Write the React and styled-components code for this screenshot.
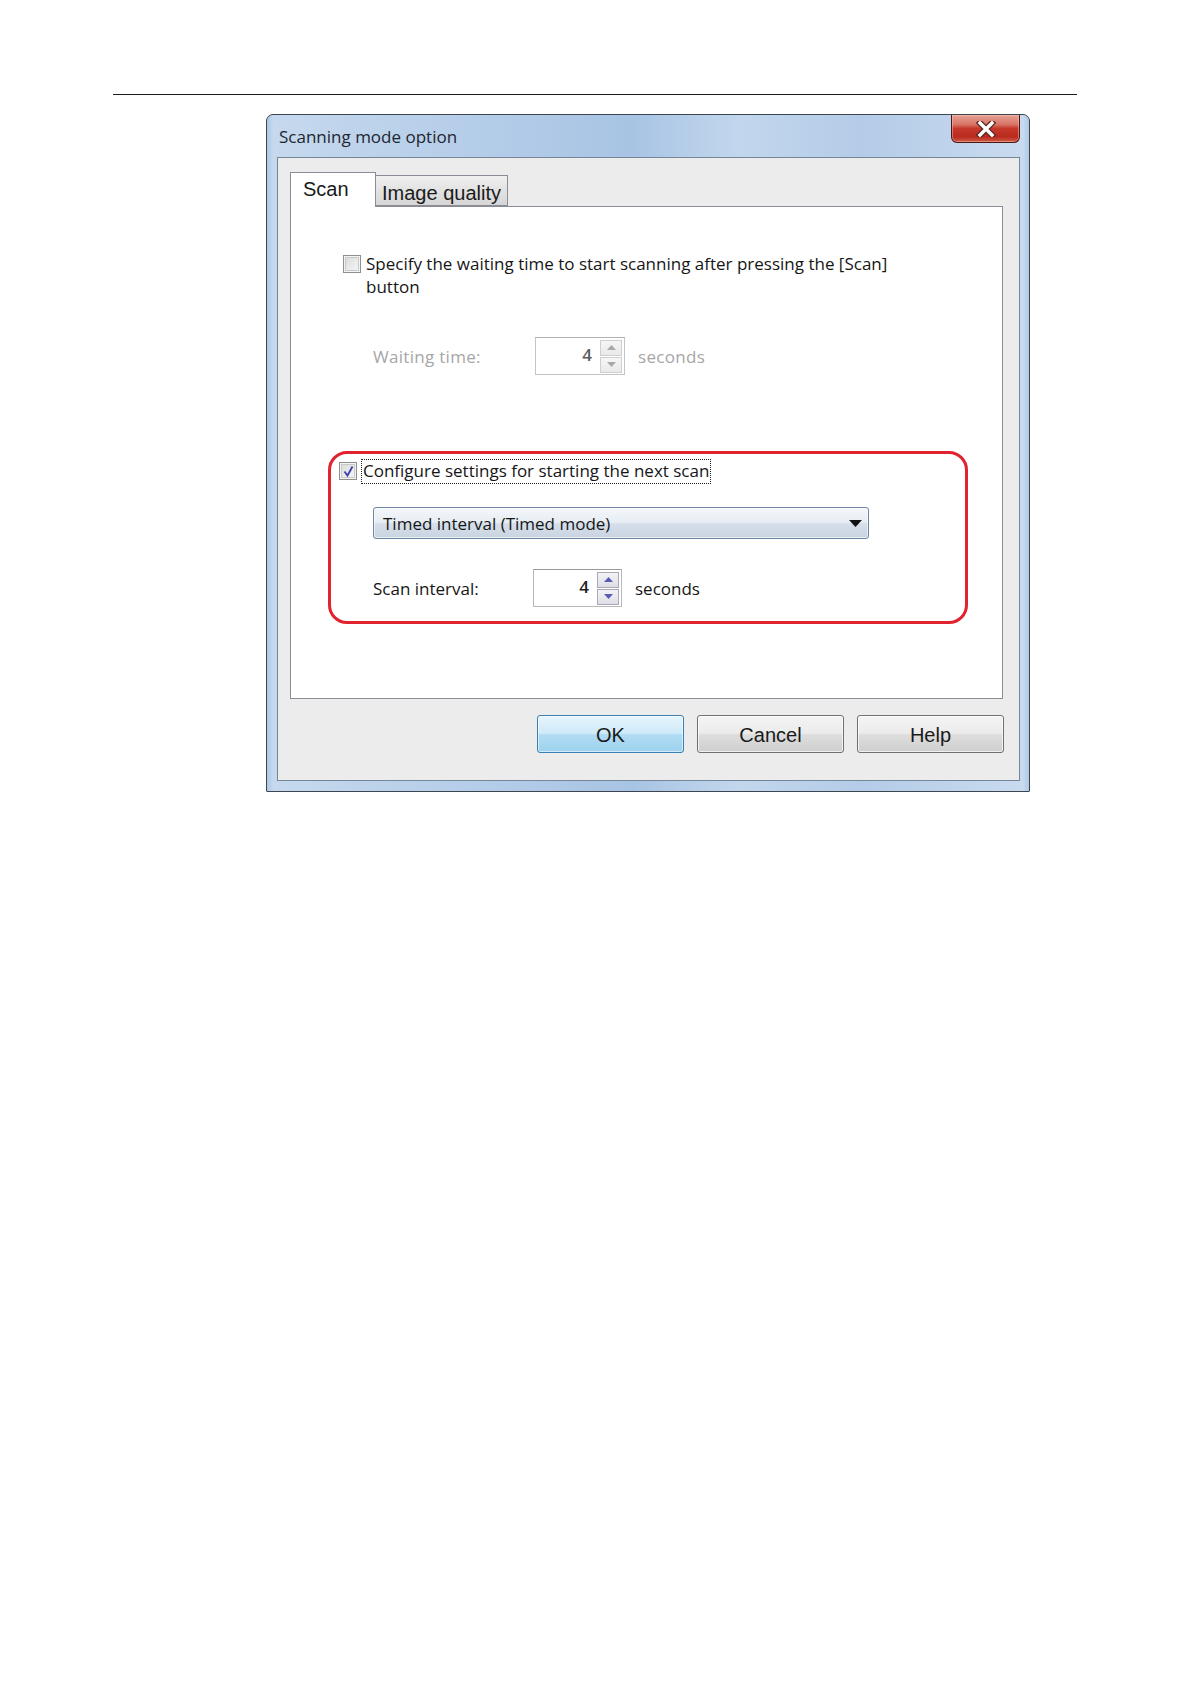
import React from 'react';
import styled, { createGlobalStyle } from 'styled-components';

const Global = createGlobalStyle`
  body {
    margin: 0;
    background: #ffffff;
  }
`;

const Page = styled.div`
  width: 1191px;
  min-height: 1684px;
  padding-top: 94px;
  box-sizing: border-box;
`;

const Rule = styled.div`
  margin-left: 113px;
  width: 964px;
  height: 1px;
  background: #1a1a1a;
`;

const Dialog = styled.div`
  margin: 19px 0 0 266px;
  width: 764px;
  height: 678px;
  box-sizing: border-box;
  border: 1px solid #3d4650;
  border-radius: 7px 7px 1px 1px;
  padding: 0 9px 10px 10px;
  display: flex;
  flex-direction: column;
  background:
    linear-gradient(90deg, rgba(150, 185, 222, 0.55) 0px, rgba(150, 185, 222, 0) 6px,
      rgba(150, 185, 222, 0) calc(100% - 6px), rgba(150, 185, 222, 0.55) 100%),
    linear-gradient(90deg, #c6d9ee 0%, #b6cee9 25%, #a8c4e4 48%, #c2d7ed 62%, #b4cce8 78%, #c9dbef 100%);
`;

const TitleBar = styled.div`
  height: 42px;
  display: flex;
  justify-content: space-between;
  align-items: flex-start;
`;

const Title = styled.div`
  align-self: center;
  margin-left: 2px;
  font-family: "Open Sans", "Noto Sans", sans-serif;
  font-size: 17px;
  color: #1e2530;
`;

const CloseButton = styled.div`
  width: 69px;
  height: 28px;
  box-sizing: border-box;
  border: 1px solid #4b1812;
  border-top: none;
  border-radius: 0 0 6px 6px;
  background: linear-gradient(180deg, #e6a295 0%, #d87566 35%, #c5382b 50%, #b92a1f 80%, #cf5b45 100%);
  box-shadow: inset 0 0 0 1px rgba(255, 200, 190, 0.45);
  display: flex;
  align-items: center;
  justify-content: center;
`;

const Client = styled.div`
  flex: 1;
  box-sizing: border-box;
  border: 1px solid #75869a;
  background: #ececec;
  padding: 14px 16px 0 12px;
  display: flex;
  flex-direction: column;
`;

const TabRow = styled.div`
  display: flex;
  align-items: flex-end;
  height: 34px;
`;

const Tab = styled.div`
  position: relative;
  z-index: ${p => (p.$active ? 1 : 0)};
  box-sizing: border-box;
  width: ${p => p.$width}px;
  height: ${p => (p.$active ? 35 : 31)}px;
  margin-bottom: ${p => (p.$active ? -1 : 0)}px;
  padding: ${p => (p.$active ? '4px 0 0 12px' : '5px 0 0 6px')};
  border: 1px solid #8a8d95;
  border-bottom: ${p => (p.$active ? 'none' : '1px solid #8a8d95')};
  border-left: ${p => (p.$active ? '1px solid #8a8d95' : 'none')};
  background: ${p => (p.$active ? '#ffffff' : 'linear-gradient(180deg, #f0f0f0 0%, #e2e2e2 50%, #d6d6d6 100%)')};
  font-family: "Liberation Sans", Arial, sans-serif;
  font-size: 20px;
  color: #1a1a1a;
  line-height: 24px;
`;

const Panel = styled.div`
  height: 493px;
  box-sizing: border-box;
  border: 1px solid #8a8d95;
  background: #ffffff;
  padding: 45px 0 0 0;
  display: flex;
  flex-direction: column;
  font-family: "Open Sans", "Noto Sans", sans-serif;
  font-size: 17px;
  color: #161616;
`;

const OptionRow = styled.div`
  display: flex;
  align-items: flex-start;
  margin-left: ${p => p.$indent}px;
`;

const Checkbox = styled.div`
  flex: none;
  width: 18px;
  height: 18px;
  box-sizing: border-box;
  margin-top: ${p => p.$top}px;
  border: 1px solid #8e8f8f;
  background: linear-gradient(135deg, #d8d8d8 0%, #ececec 60%, #f7f7f7 100%);
  box-shadow: inset 0 0 0 1px #f4f4f4, inset 0 0 0 2px #c9c9c9;
  display: flex;
  align-items: center;
  justify-content: center;
`;

const OptionText = styled.div`
  margin-left: 5px;
  width: 560px;
  line-height: 23px;
`;

const FocusText = styled.div`
  margin-left: 4px;
  padding: 0 1px;
  height: 25px;
  box-sizing: border-box;
  border: 1px dotted #222;
  line-height: 22px;
  white-space: nowrap;
`;

const FieldRow = styled.div`
  display: flex;
  align-items: center;
  margin: ${p => p.$margin};
`;

const FieldLabel = styled.div`
  width: ${p => p.$width}px;
  color: ${p => (p.$disabled ? '#a6a6a6' : '#161616')};
  letter-spacing: ${p => (p.$disabled ? '0.3px' : '0')};
`;

const Spin = styled.div`
  width: ${p => p.$width}px;
  height: 38px;
  box-sizing: border-box;
  border: 1px solid ${p => (p.$disabled ? '#c4c4c4' : '#b9b9b9')};
  border-top-color: ${p => (p.$disabled ? '#b2b2b2' : '#9a9a9a')};
  background: #ffffff;
  display: flex;
  align-items: center;
  justify-content: flex-end;
  padding-right: 2px;
`;

const SpinValue = styled.div`
  margin-right: 8px;
  margin-top: -3px;
  font-weight: 600;
  color: ${p => (p.$disabled ? '#5c5c5c' : '#222')};
`;

const SpinButtons = styled.div`
  display: flex;
  flex-direction: column;
  gap: 1px;
`;

const SpinBtn = styled.div`
  width: 22px;
  height: 16px;
  box-sizing: border-box;
  border: 1px solid ${p => (p.$disabled ? '#cfcfcf' : '#a9a9b8')};
  background: ${p => (p.$disabled ? 'linear-gradient(180deg, #f6f6f6, #e9e9e9)' : 'linear-gradient(180deg, #f3f3f7, #dedee6)')};
  display: flex;
  align-items: center;
  justify-content: center;
`;

const Unit = styled.div`
  margin-left: 13px;
  color: ${p => (p.$disabled ? '#a6a6a6' : '#161616')};
  letter-spacing: ${p => (p.$disabled ? '0.3px' : '0')};
`;

const Highlight = styled.div`
  margin: 76px 0 0 37px;
  width: 640px;
  height: 173px;
  box-sizing: border-box;
  border: 3px solid #e0232f;
  border-radius: 19px;
  padding: 5px 0 0 8px;
  display: flex;
  flex-direction: column;
`;

const Select = styled.div`
  margin: 23px 0 0 34px;
  width: 496px;
  height: 32px;
  box-sizing: border-box;
  border: 1px solid #6d85a2;
  border-radius: 3px;
  background: linear-gradient(180deg, #f4f7fb 0%, #e7edf4 48%, #d6dfea 52%, #c9d4e1 100%);
  box-shadow: inset 0 0 0 1px rgba(255, 255, 255, 0.6);
  display: flex;
  align-items: center;
  justify-content: space-between;
  padding: 0 6px 0 9px;
`;

const ButtonRow = styled.div`
  display: flex;
  justify-content: flex-end;
  gap: 13px;
  margin: 16px -1px 0 0;
`;

const Button = styled.div`
  width: 147px;
  height: 38px;
  box-sizing: border-box;
  border: 1px solid ${p => (p.$primary ? '#3c7fb1' : '#707070')};
  border-radius: 3px;
  background: ${p =>
    p.$primary
      ? 'linear-gradient(180deg, #e6f5fc 0%, #cfeaf8 48%, #b1dcf3 52%, #9dd2ef 100%)'
      : 'linear-gradient(180deg, #f4f4f4 0%, #ebebeb 48%, #dddddd 52%, #cfcfcf 100%)'};
  box-shadow: inset 0 0 0 1px ${p => (p.$primary ? 'rgba(255,255,255,0.55)' : 'rgba(255,255,255,0.7)')};
  display: flex;
  align-items: center;
  justify-content: center;
  padding-top: 2px;
  font-family: "Liberation Sans", Arial, sans-serif;
  font-size: 20px;
  color: #1a1a1a;
`;

const CloseIcon = () => (
  <svg width="22" height="16" viewBox="0 0 22 16">
    <path d="M5 2 L17 14 M17 2 L5 14" stroke="#5a2a22" strokeWidth="6" strokeLinecap="square" />
    <path d="M5 2 L17 14 M17 2 L5 14" stroke="#ffffff" strokeWidth="3.4" strokeLinecap="square" />
  </svg>
);

const Check = () => (
  <svg width="13" height="13" viewBox="0 0 13 13">
    <path d="M2.5 6.5 L5.5 10.5 L10.5 1.5" stroke="#3d3dae" strokeWidth="1.8" fill="none" />
  </svg>
);

const Arrow = ({ up, disabled }) => (
  <svg width="9" height="5" viewBox="0 0 9 5">
    <path d={up ? 'M0 5 L4.5 0 L9 5 Z' : 'M0 0 L9 0 L4.5 5 Z'} fill={disabled ? '#a8a8a8' : '#5a5ab8'} />
  </svg>
);

const Spinner = ({ value, width, disabled }) => (
  <Spin $width={width} $disabled={disabled}>
    <SpinValue $disabled={disabled}>{value}</SpinValue>
    <SpinButtons>
      <SpinBtn $disabled={disabled}><Arrow up disabled={disabled} /></SpinBtn>
      <SpinBtn $disabled={disabled}><Arrow disabled={disabled} /></SpinBtn>
    </SpinButtons>
  </Spin>
);

const App = () => {
  return (
    <Page>
      <Global />
      <Rule />
      <Dialog>
        <TitleBar>
          <Title>Scanning mode option</Title>
          <CloseButton><CloseIcon /></CloseButton>
        </TitleBar>
        <Client>
          <TabRow>
            <Tab $active $width={86}>Scan</Tab>
            <Tab $width={132}>Image quality</Tab>
          </TabRow>
          <Panel>
            <OptionRow $indent={52}>
              <Checkbox $top={3} />
              <OptionText>Specify the waiting time to start scanning after pressing the [Scan] button</OptionText>
            </OptionRow>
            <FieldRow $margin="39px 0 0 82px">
              <FieldLabel $width={162} $disabled>Waiting time:</FieldLabel>
              <Spinner value="4" width={90} disabled />
              <Unit $disabled>seconds</Unit>
            </FieldRow>
            <Highlight>
              <OptionRow $indent={0}>
                <Checkbox $top={3}><Check /></Checkbox>
                <FocusText>Configure settings for starting the next scan</FocusText>
              </OptionRow>
              <Select>
                <span>Timed interval (Timed mode)</span>
                <svg width="13" height="7" viewBox="0 0 13 7">
                  <path d="M0 0 L13 0 L6.5 7 Z" fill="#111" />
                </svg>
              </Select>
              <FieldRow $margin="30px 0 0 34px">
                <FieldLabel $width={160}>Scan interval:</FieldLabel>
                <Spinner value="4" width={89} />
                <Unit>seconds</Unit>
              </FieldRow>
            </Highlight>
          </Panel>
          <ButtonRow>
            <Button $primary>OK</Button>
            <Button>Cancel</Button>
            <Button>Help</Button>
          </ButtonRow>
        </Client>
      </Dialog>
    </Page>
  );
};

export default App;
